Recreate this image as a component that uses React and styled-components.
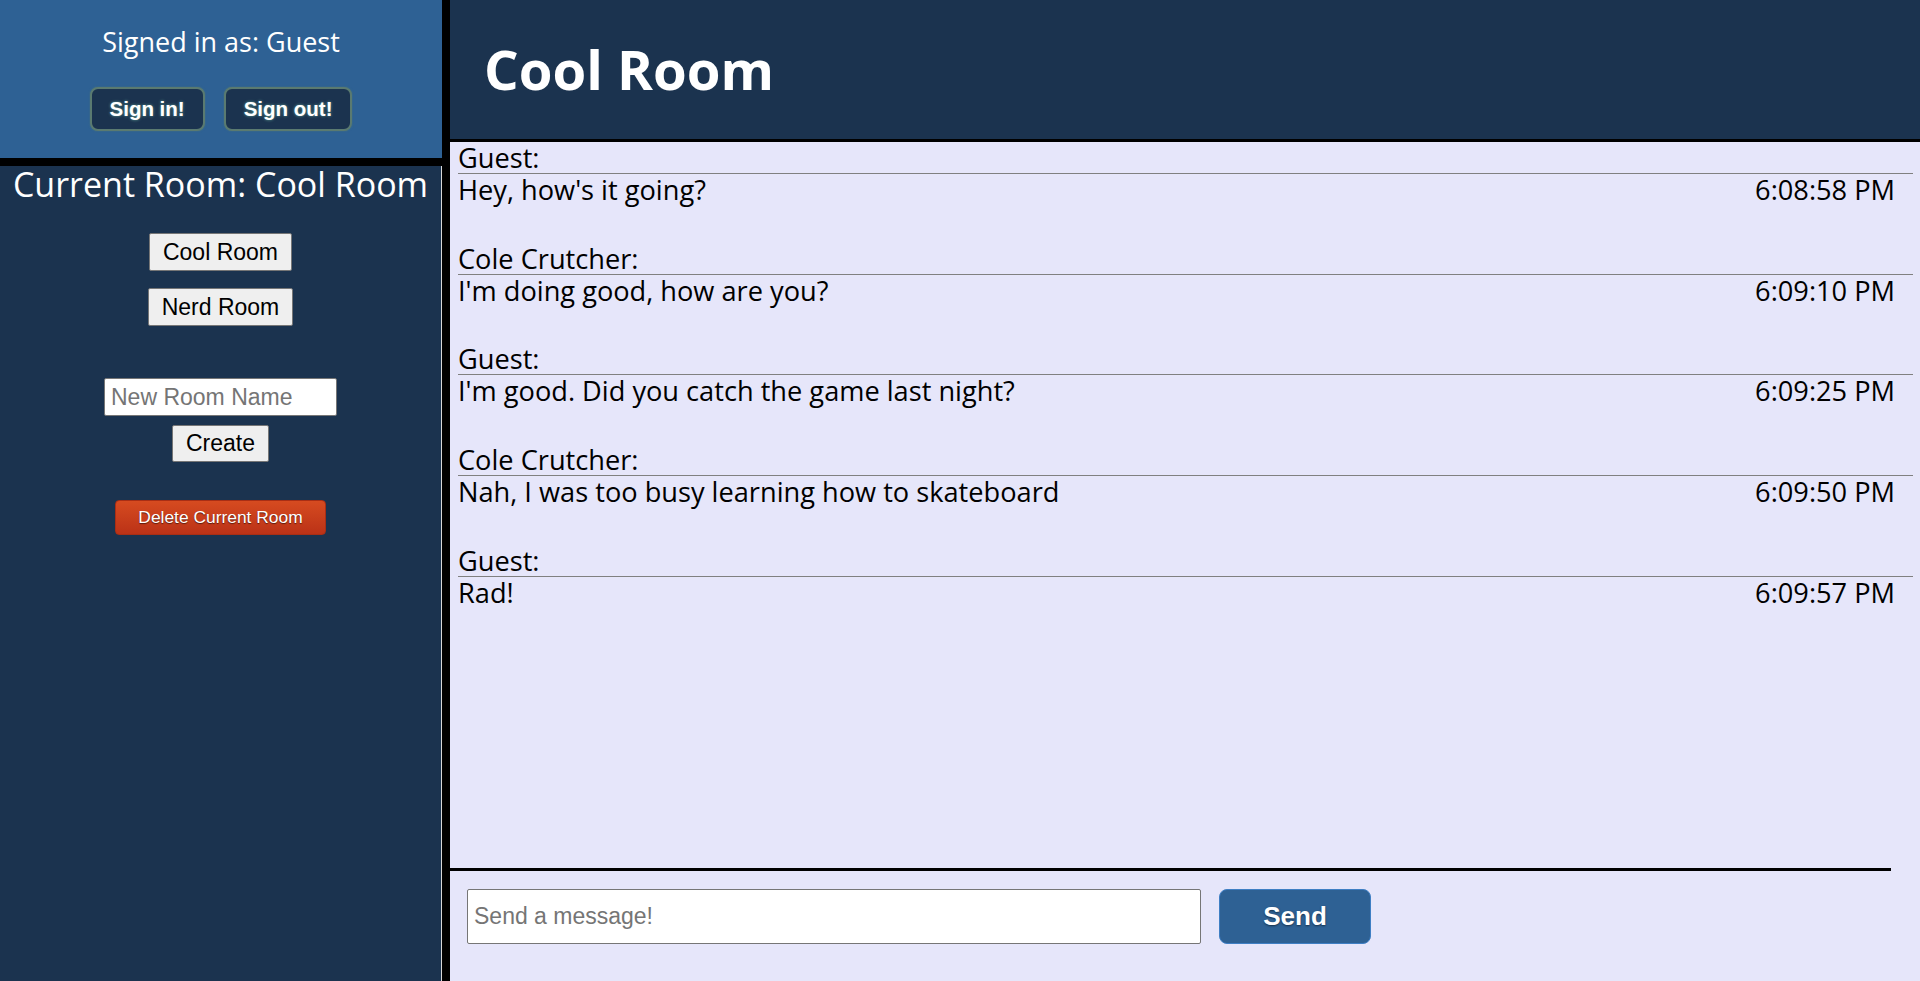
import React from "react";
import styled, { createGlobalStyle } from "styled-components";

const GlobalStyle = createGlobalStyle`
    html, body {
        margin: 0;
        padding: 0;
        height: 100%;
        background: #000;
    }
    * {
        box-sizing: border-box;
    }
`;

const AppContainer = styled.div`
    display: flex;
    gap: 8px;
    width: 100%;
    height: 100vh;
    background: #000;
    font-family: "Open Sans", "Noto Sans", sans-serif;
`;

const Sidebar = styled.div`
    display: flex;
    flex-direction: column;
    gap: 8px;
    width: 442px;
    flex-shrink: 0;
`;

const UserPanel = styled.div`
    display: flex;
    flex-direction: column;
    align-items: center;
    height: 158px;
    padding-top: 23px;
    background: #2e6194;
`;

const SignedInText = styled.div`
    color: #fff;
    font-size: 27px;
    line-height: 37px;
`;

const AuthButtonRow = styled.div`
    display: flex;
    gap: 19px;
    margin-top: 27px;
`;

const AuthButton = styled.button`
    height: 44px;
    padding: 0 18px;
    background: #1b334f;
    border: 2px solid #5a7a70;
    border-radius: 8px;
    color: #fff;
    font-family: "Liberation Sans", Arial, sans-serif;
    font-weight: bold;
    font-size: 20.5px;
    text-shadow: 0 0 3px rgba(130, 210, 180, 0.7);
    box-shadow: 0 0 2px rgba(90, 130, 110, 0.6);
    cursor: pointer;
`;

const RoomPanel = styled.div`
    flex: 1;
    display: flex;
    flex-direction: column;
    align-items: center;
    background: #1b334f;
    border-right: 1px solid #d8d8d8;
`;

const RoomTitle = styled.div`
    color: #fff;
    font-size: 34px;
    line-height: 37px;
    white-space: nowrap;
`;

const RoomList = styled.div`
    display: flex;
    flex-direction: column;
    align-items: center;
    gap: 17px;
    margin-top: 30px;
`;

const PlainButton = styled.button`
    height: ${(p) => p.$height || 38}px;
    padding: 0 13px;
    background: #efefef;
    border: 1px solid #767676;
    border-radius: 2px;
    color: #000;
    font-family: "Liberation Sans", Arial, sans-serif;
    font-size: 23px;
    cursor: pointer;
`;

const CreateForm = styled.div`
    display: flex;
    flex-direction: column;
    align-items: center;
    gap: 9px;
    margin-top: 52px;
`;

const RoomInput = styled.input`
    width: 233px;
    height: 38px;
    padding: 0 6px;
    background: #fff;
    border: 1px solid #767676;
    border-radius: 2px;
    font-family: "Liberation Sans", Arial, sans-serif;
    font-size: 23px;
    color: #000;
    &::placeholder {
        color: #757575;
    }
`;

const DeleteButton = styled.button`
    height: 35px;
    margin-top: 38px;
    padding: 0 22px;
    background: linear-gradient(#d64b20, #bb3217);
    border: 1px solid #a92e14;
    border-radius: 4px;
    color: #fff;
    font-family: "Liberation Sans", Arial, sans-serif;
    font-size: 17.4px;
    text-shadow: 0 1px 1px rgba(0, 0, 0, 0.55);
    cursor: pointer;
`;

const Main = styled.div`
    flex: 1;
    display: flex;
    flex-direction: column;
    background: #e6e6fa;
    min-width: 0;
`;

const Header = styled.div`
    display: flex;
    align-items: center;
    height: 142px;
    padding-left: 34px;
    background: #1b334f;
    border-bottom: 3px solid #000;
`;

const HeaderTitle = styled.h1`
    margin: 0;
    color: #fff;
    font-size: 54.5px;
    font-weight: 700;
    line-height: 75px;
`;

const MessageList = styled.div`
    flex: 1;
    padding: 0 7px 0 8px;
`;

const Message = styled.div`
    margin-bottom: 37.7px;
    font-size: 27.2px;
    color: #000;
`;

const Author = styled.div`
    line-height: 31px;
    border-bottom: 1px solid #808080;
`;

const MessageRow = styled.div`
    display: flex;
    justify-content: space-between;
    line-height: 31px;
`;

const Timestamp = styled.span`
    margin-right: 18px;
`;

const Divider = styled.div`
    width: 98%;
    height: 3px;
    background: #000;
`;

const Composer = styled.div`
    display: flex;
    gap: 18px;
    height: 110px;
    padding: 18px 0 0 17px;
`;

const MessageInput = styled.input`
    width: 734px;
    height: 55px;
    padding: 0 6px;
    background: #fff;
    border: 1px solid #767676;
    border-radius: 2px;
    font-family: "Liberation Sans", Arial, sans-serif;
    font-size: 23px;
    &::placeholder {
        color: #757575;
    }
`;

const SendButton = styled.button`
    width: 152px;
    height: 55px;
    background: #2e6194;
    border: 1px solid #3f7fc4;
    border-radius: 8px;
    color: #fff;
    font-family: "Liberation Sans", Arial, sans-serif;
    font-weight: bold;
    font-size: 26px;
    text-shadow: 0 1px 2px rgba(0, 0, 0, 0.5);
    cursor: pointer;
`;

const messages = [
    { author: "Guest", text: "Hey, how's it going?", time: "6:08:58 PM" },
    { author: "Cole Crutcher", text: "I'm doing good, how are you?", time: "6:09:10 PM" },
    { author: "Guest", text: "I'm good. Did you catch the game last night?", time: "6:09:25 PM" },
    { author: "Cole Crutcher", text: "Nah, I was too busy learning how to skateboard", time: "6:09:50 PM" },
    { author: "Guest", text: "Rad!", time: "6:09:57 PM" },
];

export default function App() {
    return (
        <>
            <GlobalStyle />
            <AppContainer>
                <Sidebar>
                    <UserPanel>
                        <SignedInText>Signed in as: Guest</SignedInText>
                        <AuthButtonRow>
                            <AuthButton>Sign in!</AuthButton>
                            <AuthButton>Sign out!</AuthButton>
                        </AuthButtonRow>
                    </UserPanel>
                    <RoomPanel>
                        <RoomTitle>Current Room: Cool Room</RoomTitle>
                        <RoomList>
                            <PlainButton>Cool Room</PlainButton>
                            <PlainButton>Nerd Room</PlainButton>
                        </RoomList>
                        <CreateForm>
                            <RoomInput placeholder="New Room Name" />
                            <PlainButton $height={37}>Create</PlainButton>
                        </CreateForm>
                        <DeleteButton>Delete Current Room</DeleteButton>
                    </RoomPanel>
                </Sidebar>
                <Main>
                    <Header>
                        <HeaderTitle>Cool Room</HeaderTitle>
                    </Header>
                    <MessageList>
                        {messages.map((m, i) => (
                            <Message key={i}>
                                <Author>{m.author}:</Author>
                                <MessageRow>
                                    <span>{m.text}</span>
                                    <Timestamp>{m.time}</Timestamp>
                                </MessageRow>
                            </Message>
                        ))}
                    </MessageList>
                    <Divider />
                    <Composer>
                        <MessageInput placeholder="Send a message!" />
                        <SendButton>Send</SendButton>
                    </Composer>
                </Main>
            </AppContainer>
        </>
    );
}
